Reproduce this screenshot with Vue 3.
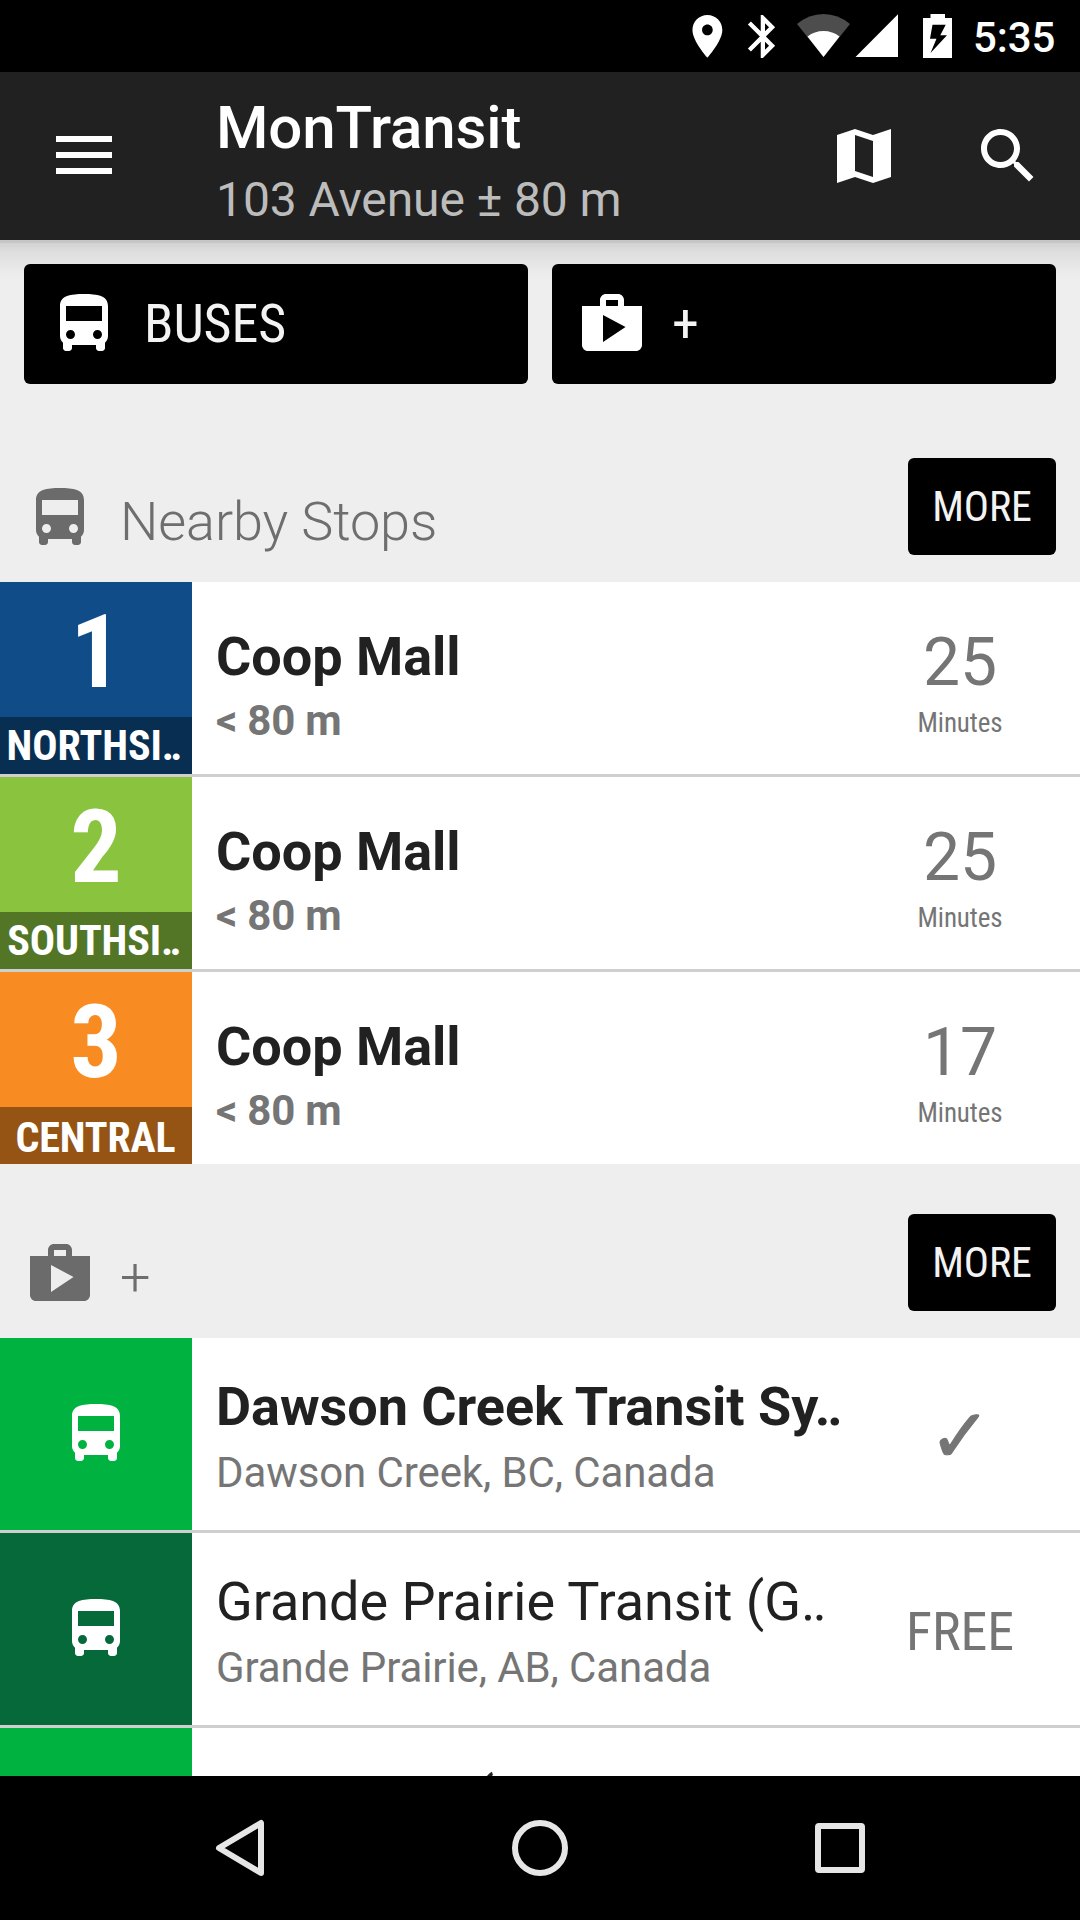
<script setup>
const bus = 'M4 16c0 .88.39 1.67 1 2.22V20c0 .55.45 1 1 1h1c.55 0 1-.45 1-1v-1h8v1c0 .55.45 1 1 1h1c.55 0 1-.45 1-1v-1.78c.61-.55 1-1.34 1-2.22V6c0-3.5-3.58-4-8-4s-8 .5-8 4v10zm3.5 1c-.83 0-1.5-.67-1.5-1.5S6.67 14 7.5 14s1.5.67 1.5 1.5S8.33 17 7.5 17zm9 0c-.83 0-1.5-.67-1.5-1.5s.67-1.5 1.5-1.5 1.5.67 1.5 1.5-.67 1.5-1.5 1.5zm1.5-6H6V6h12v5z'
const shop = 'M16 6V4c0-1.11-.89-2-2-2h-4c-1.11 0-2 .89-2 2v2H2v13c0 1.11.89 2 2 2h16c1.11 0 2-.89 2-2V6h-6zm-6-2h4v2h-4V4zM9 18V9l7.5 4L9 18z'

const shortcuts = [
  { icon: bus, label: 'BUSES' },
  { icon: shop, label: '+' },
]

const stops = [
  { route: '1', trip: 'NORTHSI‥', tone: 'blue', minutes: 25 },
  { route: '2', trip: 'SOUTHSI‥', tone: 'lime', minutes: 25 },
  { route: '3', trip: 'CENTRAL', tone: 'orange', minutes: 17 },
]

const agencies = [
  { name: 'Dawson Creek Transit Sy‥', place: 'Dawson Creek, BC, Canada', tone: 'green', status: 'installed' },
  { name: 'Grande Prairie Transit (G‥', place: 'Grande Prairie, AB, Canada', tone: 'forest', status: 'free' },
  { name: 'BC Transit (', tone: 'green' },
]
</script>

<template>
  <div class="screen">
    <header class="status">
      <svg class="status-icons" viewBox="0 0 270 72" fill="#fff">
        <path transform="translate(6.8 10.7) scale(2.133)" d="M12 2C8.13 2 5 5.13 5 9c0 5.25 7 13 7 13s7-7.75 7-13c0-3.87-3.13-7-7-7zm0 9.5c-1.38 0-2.5-1.12-2.5-2.5s1.12-2.5 2.5-2.5 2.5 1.12 2.5 2.5-1.12 2.5-2.5 2.5z" />
        <path transform="translate(62.2 10.8) scale(2.14)" d="M17.71 7.71L12 2h-1v7.59L6.41 5 5 6.41 10.59 12 5 17.59 6.41 19 11 14.41V22h1l5.71-5.71-4.3-4.29 4.3-4.29zM13 5.83l1.88 1.88L13 9.59V5.83zm1.88 10.46L13 18.17v-3.76l1.88 1.88z" />
        <path fill="#4d4d4d" d="M122 24Q134 14 148.500 14Q163 14 175 24L148.500 57Z" />
        <path d="M132.500 36.500Q139.500 31 148.500 31Q157.500 31 164.500 36.500L148.500 57Z" />
        <path d="M180.500 57L223 14.300V57Z" />
        <path fill-rule="evenodd" d="M255.500 14H270V18H277V58H248V18H255.500ZM257.500 24.700L255 38.700H261.500L255.500 53L272 35.300H265.300L270.700 24.700Z" />
      </svg>
      <span class="clock">5:35</span>
    </header>

    <div class="toolbar">
      <div class="menu"><i></i><i></i><i></i></div>
      <div class="titles">
        <div class="title">MonTransit</div>
        <div class="subtitle">103 Avenue ± 80 m</div>
      </div>
      <svg class="icon map" viewBox="0 0 24 24"><path fill-rule="evenodd" d="M3 5L9 3 15 5 21 3V19L15 21 9 19 3 21ZM9 5V17L15 19V7Z" /></svg>
      <svg class="icon" viewBox="0 0 24 24"><path d="M15.5 14h-.79l-.28-.27C15.410 12.590 16 11.110 16 9.500 16 5.910 13.090 3 9.500 3S3 5.910 3 9.500 5.910 16 9.500 16c1.610 0 3.090-.59 4.230-1.570l.27.28v.79l5 4.990L20.490 19l-4.990-5zm-6 0C7.010 14 5 11.990 5 9.500S7.010 5 9.500 5 14 7.010 14 9.500 11.990 14 9.500 14z" /></svg>
    </div>

    <main class="content">
      <div class="shortcuts">
        <div v-for="s in shortcuts" :key="s.label" class="shortcut">
          <svg class="icon" viewBox="0 0 24 24"><path :d="s.icon" /></svg>
          <span class="label">{{ s.label }}</span>
        </div>
      </div>

      <section>
        <div class="head first">
          <svg class="icon" viewBox="0 0 24 24"><path :d="bus" /></svg>
          <span class="head-title">Nearby Stops</span>
          <span class="more">MORE</span>
        </div>
        <div class="list">
          <div v-for="s in stops" :key="s.route" class="row">
            <div class="tile" :class="s.tone">
              <div class="route">{{ s.route }}</div>
              <div class="trip" :class="{ full: !s.trip.endsWith('‥') }">{{ s.trip }}</div>
            </div>
            <div class="body stop">
              <div class="name bold">Coop Mall</div>
              <div class="sub bold">&lt; 80 m</div>
            </div>
            <div class="side time">
              <div class="minutes">{{ s.minutes }}</div>
              <div class="unit">Minutes</div>
            </div>
          </div>
        </div>
      </section>

      <section>
        <div class="head">
          <svg class="icon" viewBox="0 0 24 24"><path :d="shop" /></svg>
          <span class="head-title">+</span>
          <span class="more">MORE</span>
        </div>
        <div class="list">
          <div v-for="a in agencies" :key="a.name" class="row">
            <div class="tile agency-tile" :class="a.tone">
              <svg class="icon" viewBox="0 0 24 24"><path :d="bus" /></svg>
            </div>
            <div class="body">
              <div class="name" :class="{ bold: a.status === 'installed' }">{{ a.name }}</div>
              <div v-if="a.place" class="sub">{{ a.place }}</div>
            </div>
            <div v-if="a.status === 'installed'" class="side check">✓</div>
            <div v-else-if="a.status === 'free'" class="side price">FREE</div>
          </div>
        </div>
      </section>
    </main>

    <nav class="nav">
      <svg viewBox="0 0 72 72"><path d="M57 11V61L15 36Z" /></svg>
      <svg viewBox="0 0 72 72"><circle cx="36" cy="36" r="25" /></svg>
      <svg viewBox="0 0 72 72"><rect x="14" y="14" width="44" height="44" rx="1" /></svg>
    </nav>
  </div>
</template>

<style>
body {
  background: #eee;
}
</style>

<style scoped>
.screen {
  width: 1080px;
  height: 1920px;
  display: flex;
  flex-direction: column;
  overflow: hidden;
  background: #eee;
  font-family: Roboto, "Liberation Sans", sans-serif;
  letter-spacing: -0.1px;
  white-space: nowrap;
}
.icon {
  width: 72px;
  height: 72px;
  flex: none;
  fill: #fff;
  display: block;
}
.status {
  height: 72px;
  flex: none;
  background: #000;
  display: flex;
  justify-content: flex-end;
  padding-right: 24px;
}
.status-icons {
  width: 270px;
  height: 72px;
  overflow: visible;
  margin-right: 28px;
}
.clock {
  color: #fff;
  font-size: 42px;
  font-weight: 500;
  line-height: 75px;
  width: 83px;
}
.toolbar {
  height: 168px;
  flex: none;
  background: #212121;
  display: flex;
  align-items: center;
  padding: 0 36px 0 56px;
}
.menu {
  width: 56px;
  display: flex;
  flex-direction: column;
  gap: 10px;
  padding-bottom: 2px;
}
.menu i {
  height: 6px;
  background: #fff;
}
.titles {
  flex: 1;
  margin-left: 104px;
  align-self: flex-start;
  padding-top: 21px;
}
.title {
  font-size: 60px;
  font-weight: 500;
  line-height: 70px;
  color: #fff;
}
.subtitle {
  margin-top: 9px;
  font-size: 48px;
  line-height: 56px;
  color: #bcbcbc;
}
.map {
  margin-right: 72px;
}
.content {
  height: 1536px;
  flex: none;
  overflow: hidden;
  background: linear-gradient(#c6c6c6 0 3px, #d2d2d2 3px, #dedede 12px, #e5e5e5 22px, #ebebeb 32px, #eee 40px);
}
.shortcuts {
  display: flex;
  gap: 24px;
  padding: 24px 24px 0;
}
.shortcut {
  flex: 1;
  height: 120px;
  box-sizing: border-box;
  border-radius: 6px;
  background: #000;
  color: #f3f3f3;
  display: flex;
  align-items: center;
  gap: 24px;
  padding: 0 24px;
  font-family: "Roboto Condensed", Roboto, sans-serif;
  font-stretch: 75%;
  font-size: 54px;
}
.label {
  line-height: 64px;
}
.head {
  height: 174px;
  box-sizing: border-box;
  display: flex;
  align-items: flex-start;
  padding: 50px 24px 0;
}
.head.first {
  height: 198px;
  padding-top: 74px;
}
.head .icon {
  fill: #6b6b6b;
  margin: 24px 24px 0 0;
}
.head-title {
  flex: 1;
  font-size: 54px;
  font-weight: 300;
  line-height: 64px;
  margin-top: 32px;
  color: #6e6e6e;
}
.more {
  width: 148px;
  height: 97px;
  border-radius: 6px;
  background: #000;
  color: #f3f3f3;
  text-align: center;
  font-family: "Roboto Condensed", Roboto, sans-serif;
  font-stretch: 75%;
  font-size: 42px;
  line-height: 97px;
}
.list {
  display: flex;
  flex-direction: column;
  gap: 3px;
  background: #cfcfcf;
}
.row {
  height: 192px;
  display: flex;
  background: #fff;
}
.tile {
  width: 192px;
  flex: none;
  color: #fff;
  text-align: center;
  font-family: "Roboto Condensed", Roboto, sans-serif;
  font-stretch: 75%;
  font-weight: 700;
}
.agency-tile {
  display: flex;
  align-items: center;
  justify-content: center;
}
.route {
  height: 135px;
  font-size: 102px;
  line-height: 140px;
}
.trip {
  height: 57px;
  box-sizing: border-box;
  padding-right: 4px;
  font-size: 42px;
  line-height: 57px;
}
.trip.full {
  padding-right: 1px;
  line-height: 61px;
}
.blue { background: #0f4c88; }
.lime { background: #8ac43f; }
.orange { background: #f88b22; }
.blue .trip { background: #082e52; }
.lime .trip { background: #527626; }
.orange .trip { background: #955314; }
.green { background: #00b340; }
.forest { background: #05693a; }
.body {
  width: 624px;
  flex: none;
  padding: 37px 0 0 24px;
}
.stop {
  padding-top: 43px;
}
.name {
  font-size: 54px;
  line-height: 64px;
  letter-spacing: -0.04px;
  color: #212121;
}
.sub {
  margin-top: 9px;
  font-size: 42px;
  line-height: 50px;
  color: #757575;
}
.stop .sub {
  margin-top: 7px;
  letter-spacing: -0.25px;
}
.bold {
  font-weight: 700;
}
.side {
  width: 240px;
  text-align: center;
  color: #757575;
}
.time {
  padding-top: 42px;
}
.minutes {
  font-size: 66px;
  line-height: 78px;
}
.unit {
  margin-top: 5px;
  font-family: "Roboto Condensed", Roboto, sans-serif;
  font-stretch: 75%;
  font-size: 27px;
  line-height: 32px;
}
.price {
  line-height: 197px;
  font-family: "Roboto Condensed", Roboto, sans-serif;
  font-stretch: 75%;
  font-size: 54px;
}
.check {
  font-family: "DejaVu Sans", sans-serif;
  font-size: 75px;
  line-height: 197px;
  -webkit-text-stroke: 1px #757575;
}
.nav {
  height: 144px;
  flex: none;
  background: #000;
  display: flex;
  align-items: center;
  justify-content: center;
  gap: 228px;
}
.nav svg {
  width: 72px;
  height: 72px;
  fill: none;
  stroke: #e6e6e6;
  stroke-width: 6;
  stroke-linejoin: round;
}
</style>
